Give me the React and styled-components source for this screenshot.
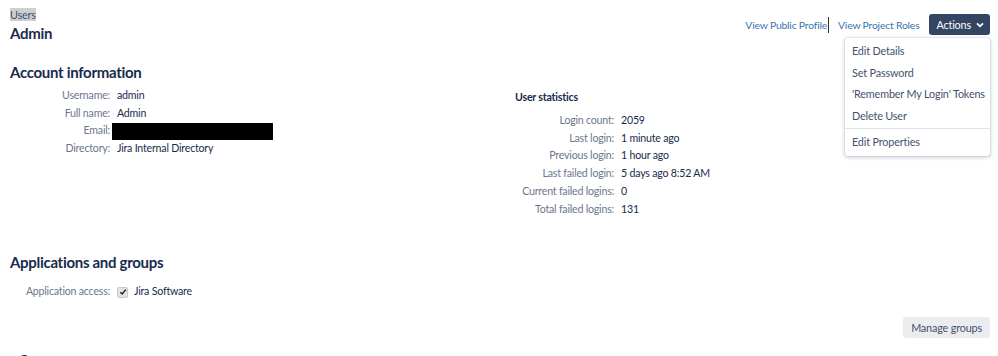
import React from 'react';
import styled, { createGlobalStyle } from 'styled-components';

const GlobalStyle = createGlobalStyle`
  body {
    margin: 0;
    background: #fff;
    font-family: Lato, 'Open Sans', sans-serif;
    color: #172b4d;
    overflow: hidden;
  }
`;

const Page = styled.div`
  padding: 8px 8px 0 10px;
  width: 980px;
  height: 356px;
  overflow: hidden;
`;

const Header = styled.div`
  display: flex;
  justify-content: space-between;
  align-items: flex-start;
`;

const Crumb = styled.span`
  display: block;
  width: fit-content;
  font-size: 10.8px;
  letter-spacing: -0.2px;
  line-height: 13px;
  color: #42526e;
  background: #cfcfcf;
`;

const PageTitle = styled.h1`
  margin: 2px 0 0;
  font-size: 15px;
  letter-spacing: -0.3px;
  font-weight: 700;
  line-height: 20px;
`;

const HeaderActions = styled.div`
  display: flex;
  align-items: center;
  margin-top: 6px;
  position: relative;
`;

const HeaderLink = styled.a`
  font-size: 10.4px;
  letter-spacing: -0.2px;
  color: #3b73af;
  text-decoration: none;
  padding: 0 ${({ $cursor }) => ($cursor ? '1px' : '0')} 0 0;
  margin-right: ${({ $gap }) => $gap}px;
  border-right: ${({ $cursor }) => ($cursor ? '1px solid #333' : 'none')};
  line-height: 16px;
`;

const ActionsButton = styled.button`
  display: flex;
  align-items: center;
  gap: 5px;
  height: 21px;
  padding: 0 6px 0 7px;
  border: none;
  border-radius: 3px;
  background: #344563;
  color: #fff;
  font-family: inherit;
  font-size: 10.8px;
  letter-spacing: -0.15px;
`;

const Menu = styled.div`
  position: absolute;
  top: 24px;
  right: 0;
  width: 145px;
  background: #fff;
  border-radius: 3px;
  box-shadow: 0 1px 4px rgba(9, 30, 66, 0.28), 0 0 1px rgba(9, 30, 66, 0.3);
  padding: 2px 0 3px;
`;

const MenuItem = styled.div`
  font-size: 10.8px;
  letter-spacing: -0.15px;
  line-height: 21.5px;
  padding: 0 7px;
  color: #42526e;
  white-space: nowrap;
`;

const MenuDivider = styled.div`
  height: 1px;
  background: #dfe1e6;
  margin: 2px 0 2px;
`;

const SectionTitle = styled.h2`
  margin: ${({ $top }) => $top}px 0 0 ${({ $left }) => $left || 0}px;
  font-size: 15px;
  letter-spacing: -0.3px;
  font-weight: 700;
  line-height: 20px;
`;

const Columns = styled.div`
  display: flex;
`;

const DetailList = styled.div`
  display: grid;
  grid-template-columns: ${({ $label }) => $label}px auto;
  column-gap: 7px;
  margin-top: ${({ $top }) => $top}px;
  font-size: 10.6px;
  letter-spacing: -0.2px;
  line-height: 17.7px;
  align-content: start;
`;

const Label = styled.div`
  text-align: right;
  color: #6b778c;
  white-space: nowrap;
`;

const Value = styled.div`
  color: #172b4d;
  white-space: nowrap;
  display: flex;
  align-items: center;
  gap: 6px;
`;

const Redacted = styled.div`
  width: 161px;
  height: 17px;
  margin-left: -5px;
  background: #000;
`;

const LeftCol = styled.div`
  width: 505px;
`;

const StatsCol = styled.div`
  padding-top: 8px;
`;

const StatsTitle = styled.h3`
  margin: 0;
  font-size: 10.6px;
  letter-spacing: -0.2px;
  font-weight: 700;
  line-height: 14px;
`;

const Check = styled.span`
  display: inline-flex;
  align-items: center;
  justify-content: center;
  width: 9px;
  height: 9px;
  border-radius: 2px;
  background: #e4e4e4;
  border: 1px solid #c8c8c8;
`;

const ButtonRow = styled.div`
  display: flex;
  justify-content: flex-end;
  margin-top: 16px;
`;

const GreyButton = styled.button`
  height: 21px;
  padding: 0 8px;
  border: none;
  border-radius: 3px;
  background: #ebecf0;
  color: #42526e;
  font-family: inherit;
  font-size: 10.8px;
  letter-spacing: -0.15px;
`;

const Chevron = () => (
  <svg width="8" height="6" viewBox="0 0 8 6">
    <path d="M1 1.3 L4 4.3 L7 1.3" stroke="#fff" strokeWidth="1.8" fill="none" />
  </svg>
);

const Tick = () => (
  <svg width="8" height="8" viewBox="0 0 8 8">
    <path d="M1.3 4.2 L3.2 6 L6.8 1.6" stroke="#222" strokeWidth="1.5" fill="none" />
  </svg>
);

const account = [
  ['Username:', 'admin'],
  ['Full name:', 'Admin'],
  ['Email:', null],
  ['Directory:', 'Jira Internal Directory'],
];

const stats = [
  ['Login count:', '2059'],
  ['Last login:', '1 minute ago'],
  ['Previous login:', '1 hour ago'],
  ['Last failed login:', '5 days ago 8:52 AM'],
  ['Current failed logins:', '0'],
  ['Total failed logins:', '131'],
];

const menu = ['Edit Details', 'Set Password', "'Remember My Login' Tokens", 'Delete User'];

export default function App() {
  return (
    <Page>
      <GlobalStyle />
      <Header>
        <div>
          <Crumb>Users</Crumb>
          <PageTitle>Admin</PageTitle>
        </div>
        <HeaderActions>
          <HeaderLink $cursor $gap={9}>View Public Profile</HeaderLink>
          <HeaderLink $gap={10}>View Project Roles</HeaderLink>
          <ActionsButton>
            Actions <Chevron />
          </ActionsButton>
          <Menu>
            {menu.map((m) => (
              <MenuItem key={m}>{m}</MenuItem>
            ))}
            <MenuDivider />
            <MenuItem>Edit Properties</MenuItem>
          </Menu>
        </HeaderActions>
      </Header>

      <SectionTitle $top={19}>Account information</SectionTitle>
      <Columns>
        <LeftCol>
          <DetailList $label={100} $top={5}>
            {account.map(([l, v]) => (
              <React.Fragment key={l}>
                <Label>{l}</Label>
                <Value>{v === null ? <Redacted /> : v}</Value>
              </React.Fragment>
            ))}
          </DetailList>
        </LeftCol>
        <StatsCol>
          <StatsTitle>User statistics</StatsTitle>
          <DetailList $label={99} $top={8}>
            {stats.map(([l, v]) => (
              <React.Fragment key={l}>
                <Label>{l}</Label>
                <Value>{v}</Value>
              </React.Fragment>
            ))}
          </DetailList>
        </StatsCol>
      </Columns>

      <SectionTitle $top={34}>Applications and groups</SectionTitle>
      <DetailList $label={100} $top={11}>
        <Label>Application access:</Label>
        <Value>
          <Check>
            <Tick />
          </Check>
          Jira Software
        </Value>
      </DetailList>
      <ButtonRow>
        <GreyButton>Manage groups</GreyButton>
      </ButtonRow>
      <SectionTitle $top={12} $left={8}>Groups</SectionTitle>
    </Page>
  );
}
